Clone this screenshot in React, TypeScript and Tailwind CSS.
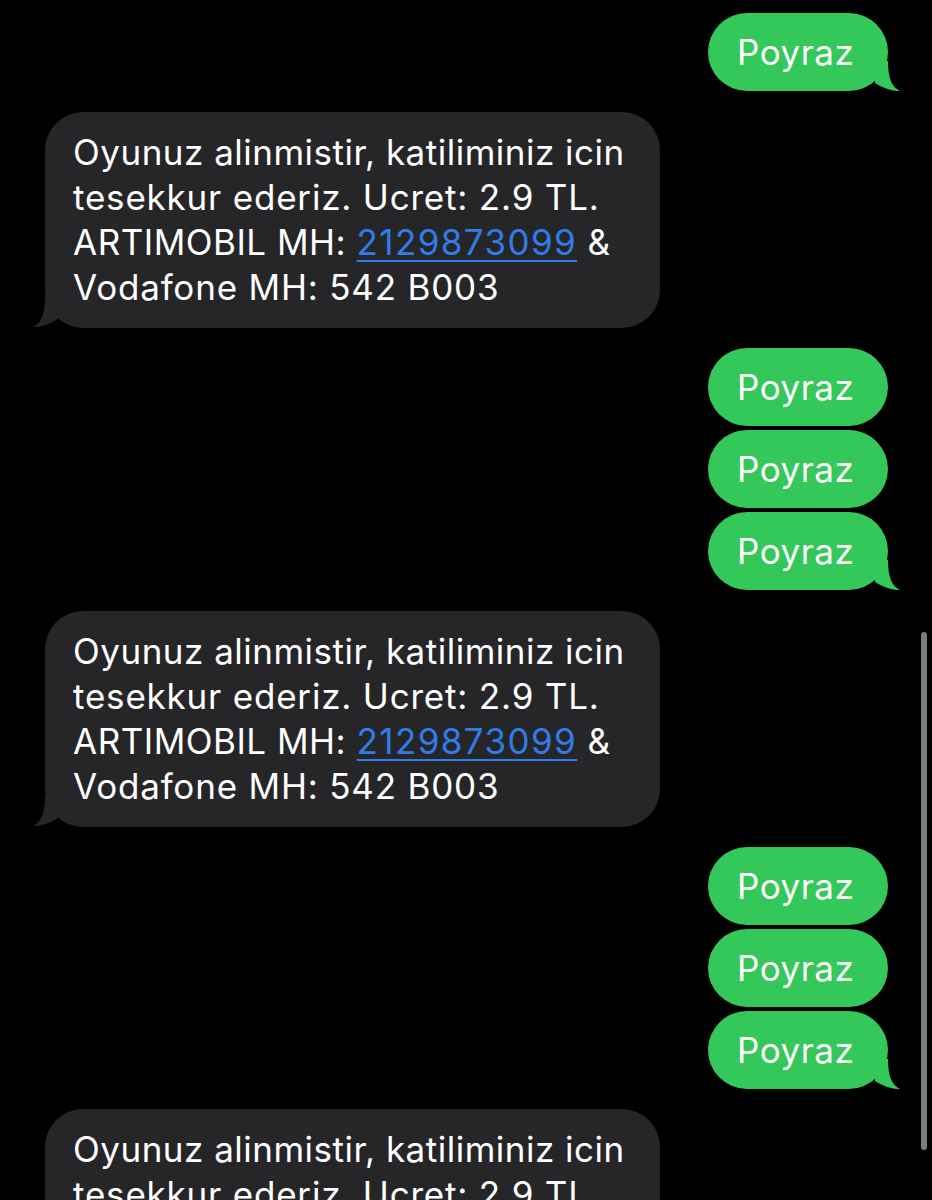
import React from "react";

const GREEN = "#34c759";
const GRAY = "#262628";

function Tail({ color, side }: { color: string; side: "left" | "right" }) {
  return (
    <svg
      width="30"
      height="32"
      viewBox="0 0 30 32"
      className={
        side === "right"
          ? "absolute right-[-14px] bottom-0"
          : "absolute left-[-14px] bottom-[1px] -scale-x-100"
      }
    >
      <path d="M16 2 C16 20 20 28 28 32 C22 32.5 10 29 3 24 L3 2 Z" fill={color} />
    </svg>
  );
}

function Sent({ tail }: { tail?: boolean }) {
  return (
    <div className="relative h-[78px] w-[180px] self-end rounded-[39px] bg-[#34c759] pl-[29px] flex items-center text-white">
      <span>Poyraz</span>
      {tail && <Tail color={GREEN} side="right" />}
    </div>
  );
}

function Received() {
  return (
    <div className="relative w-[615px] self-start rounded-[38px] bg-[#262628] pl-[28px] py-[18px] leading-[45px] text-white">
      <div>Oyunuz alinmistir, katiliminiz icin</div>
      <div className="tracking-[0.8px]">tesekkur ederiz. Ucret: 2.9 TL.</div>
      <div>
        ARTIMOBIL MH:{" "}
        <span className="text-[#2f7de8] tracking-[1.4px] underline decoration-[#2f7de8] decoration-2 underline-offset-[5px]">
          2129873099
        </span>{" "}
        &amp;
      </div>
      <div className="tracking-[0.8px]">Vodafone MH: 542 B003</div>
      <Tail color={GRAY} side="left" />
    </div>
  );
}

export default function App() {
  return (
    <div className="relative h-[1200px] w-[932px] overflow-hidden bg-black font-['Inter','Noto_Sans',sans-serif] text-[35px] tracking-[0.5px]">
      <div className="flex flex-col pt-[13px] pl-[45px] pr-[44px]">
        <Sent tail />
        <div className="mt-[21px] flex flex-col">
          <Received />
        </div>
        <div className="mt-[20px] flex flex-col gap-[4px]">
          <Sent />
          <Sent />
          <Sent tail />
        </div>
        <div className="mt-[21px] flex flex-col">
          <Received />
        </div>
        <div className="mt-[20px] flex flex-col gap-[4px]">
          <Sent />
          <Sent />
          <Sent tail />
        </div>
        <div className="mt-[20px] flex flex-col">
          <Received />
        </div>
      </div>
      <div className="absolute left-[921px] top-[632px] h-[518px] w-[6px] rounded-full bg-[#7c7c7c]" />
    </div>
  );
}
